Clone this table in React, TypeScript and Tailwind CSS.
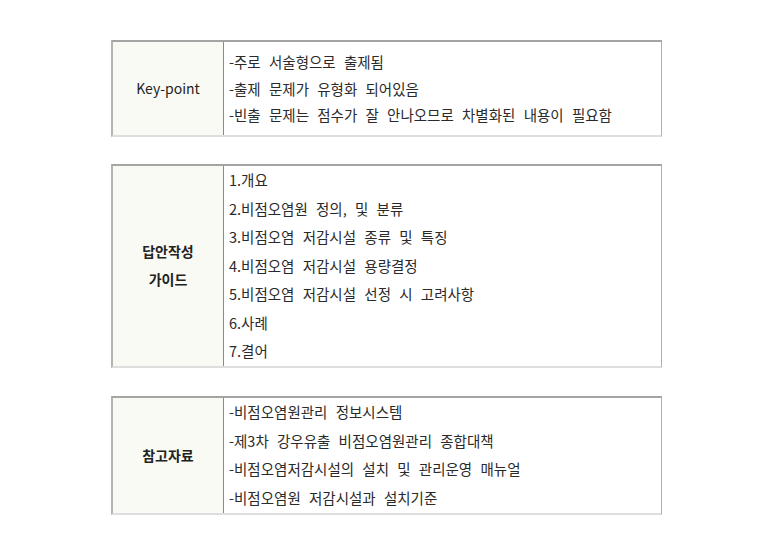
import React from 'react'

type Block = {
  label: string[]
  bold: boolean
  items: string[]
  rowH: string
  pad: string
}

const blocks: Block[] = [
  {
    label: ['Key-point'],
    bold: false,
    items: [
      '-주로 서술형으로 출제됨',
      '-출제 문제가 유형화 되어있음',
      '-빈출 문제는 점수가 잘 안나오므로 차별화된 내용이 필요함',
    ],
    rowH: 'h-[26.5px]',
    pad: 'pt-[7px] pb-[6px]',
  },
  {
    label: ['답안작성', '가이드'],
    bold: true,
    items: [
      '1.개요',
      '2.비점오염원 정의, 및 분류',
      '3.비점오염 저감시설 종류 및 특징',
      '4.비점오염 저감시설 용량결정',
      '5.비점오염 저감시설 선정 시 고려사항',
      '6.사례',
      '7.결어',
    ],
    rowH: 'h-[28.6px]',
    pad: 'pt-0 pb-0',
  },
  {
    label: ['참고자료'],
    bold: true,
    items: [
      '-비점오염원관리 정보시스템',
      '-제3차 강우유출 비점오염원관리 종합대책',
      '-비점오염저감시설의 설치 및 관리운영 매뉴얼',
      '-비점오염원 저감시설과 설치기준',
    ],
    rowH: 'h-[28.6px]',
    pad: 'pt-0 pb-[1px]',
  },
]

function InfoTable({ block }: { block: Block }) {
  return (
    <div className="flex w-[551px] border-t-2 border-l-2 border-t-[#a4a4a4] border-l-[#b4b4b4] border-b-2 border-b-[#dedede] border-r border-r-[#b0b0b0] bg-white">
      <div className="w-[111px] shrink-0 bg-[#fafaf4] border-r border-r-[#8a8a8a] flex flex-col items-center justify-center">
        {block.label.map((l) => (
          <div
            key={l}
            className={`h-[28px] flex items-center text-[#222] ${block.bold ? 'text-[14px] font-bold' : 'text-[14px] font-normal'}`}
          >
            {l}
          </div>
        ))}
      </div>
      <div className={`flex-1 flex flex-col pl-[5px] ${block.pad}`}>
        {block.items.map((it) => (
          <div
            key={it}
            className={`${block.rowH} flex items-center text-[14.5px] text-[#2a2a2a] [word-spacing:5px] whitespace-nowrap`}
          >
            {it}
          </div>
        ))}
      </div>
    </div>
  )
}

export default function App() {
  return (
    <div
      className="w-[773px] h-[536px] bg-white pt-[40px] pl-[111px] flex flex-col"
      style={{ fontFamily: '"Noto Sans CJK KR", "Noto Sans", sans-serif' }}
    >
      <InfoTable block={blocks[0]} />
      <div className="h-[27px]" />
      <InfoTable block={blocks[1]} />
      <div className="h-[28px]" />
      <InfoTable block={blocks[2]} />
    </div>
  )
}
